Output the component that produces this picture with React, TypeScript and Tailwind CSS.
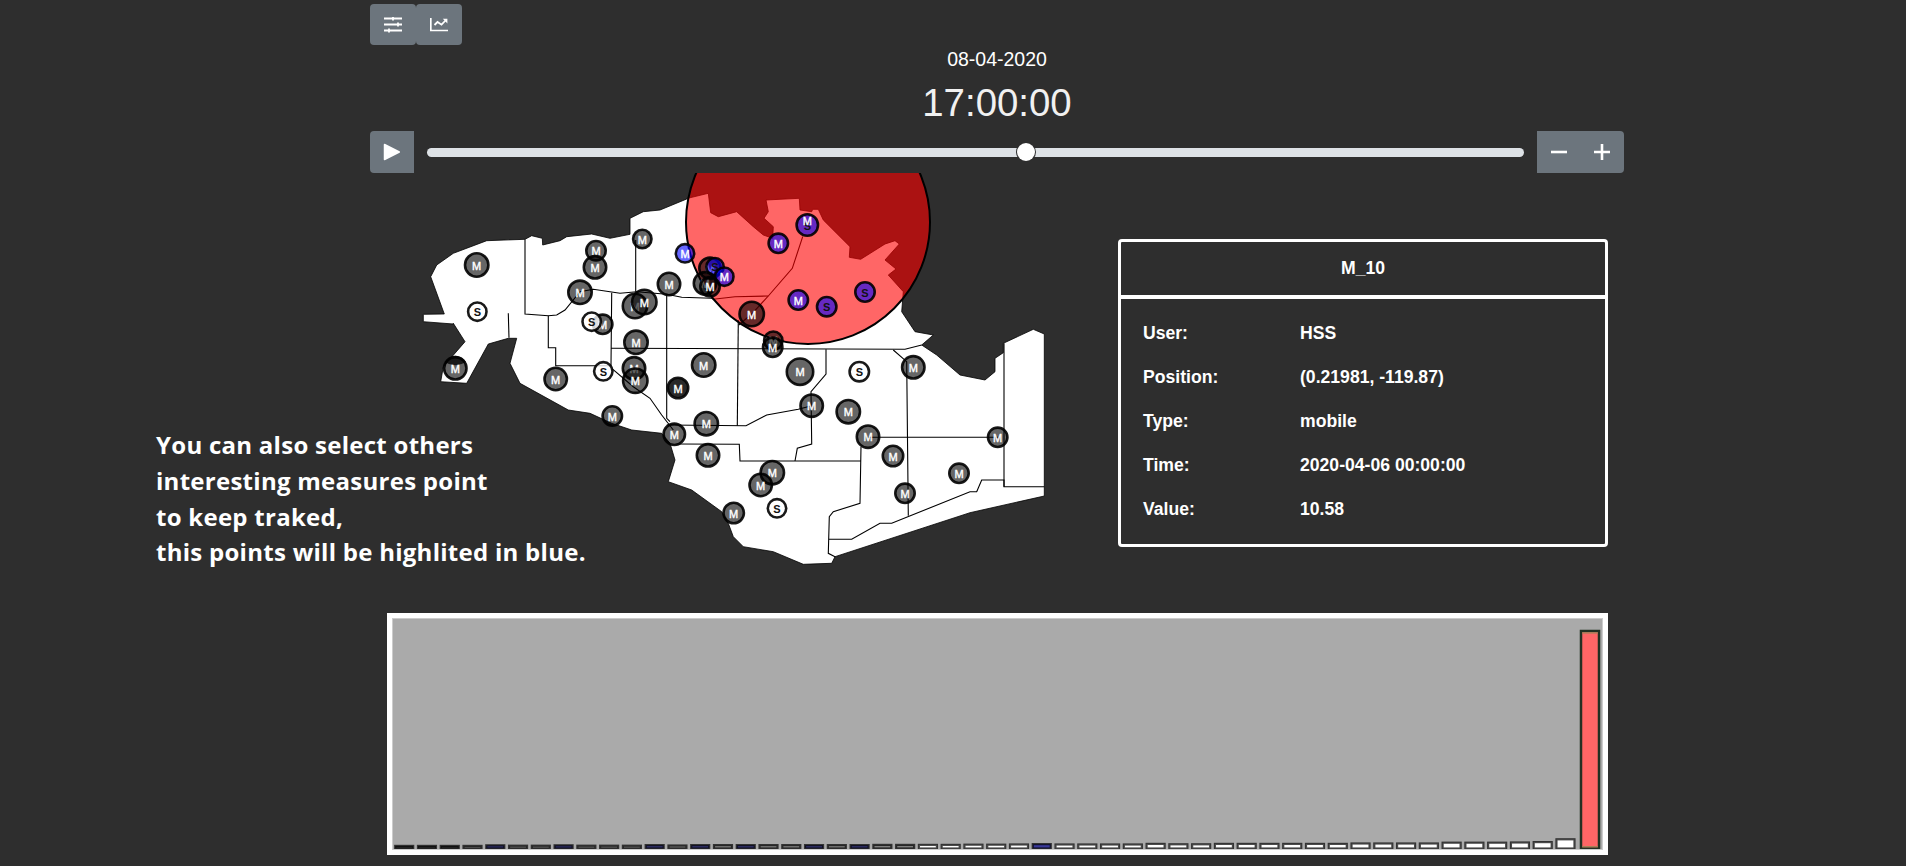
import { ReactNode } from 'react';

type Pt = [number, number];
type Marker = [x: number, y: number, r: number, label: 'M' | 'S', color?: 'blue'];

// traced from crops of the map: zoom-space points mapped to page pixels
const zoomed = (ox: number, oy: number, pts: number[]): Pt[] => {
  const out: Pt[] = [];
  for (let i = 0; i < pts.length; i += 2) out.push([ox + pts[i] / 3, oy + pts[i + 1] / 3]);
  return out;
};
const toD = (pts: Pt[]) => pts.map((p, i) => `${i ? 'L' : 'M'}${p[0].toFixed(1)} ${p[1].toFixed(1)}`).join(' ');

const outline: Pt[] = [
  ...zoomed(410, 170, [62, 320, 80, 285, 130, 250, 230, 212, 345, 208, 365, 197, 397, 205, 398, 225, 450, 212, 470, 200, 545, 192, 600, 205, 660, 193, 660, 145, 700, 125, 750, 120, 830, 87]),
  ...zoomed(620, 170, [203, 85, 265, 70, 272, 128, 295, 140, 350, 125, 400, 170, 430, 195, 458, 205, 460, 170, 432, 145, 445, 125, 438, 90, 538, 85, 540, 120, 575, 125, 578, 118, 595, 118, 610, 150, 690, 230, 688, 262, 722, 268, 795, 222, 825, 212, 838, 222, 795, 270, 828, 297, 805, 315, 850, 365, 845, 425, 885, 485, 940, 495, 905, 525]),
  ...zoomed(720, 320, [605, 75, 650, 105, 720, 165, 795, 180, 825, 155, 825, 115, 850, 98, 850, 70, 940, 28, 973, 42, 973, 528, 750, 578, 345, 710, 335, 730, 250, 733, 160, 695, 70, 680, 40, 650, 25, 610]),
  ...zoomed(420, 320, [905, 575, 815, 510, 745, 485, 765, 420, 750, 370, 725, 340, 635, 330, 575, 310, 510, 280, 445, 270, 300, 190, 270, 130, 290, 55, 265, 55, 205, 72, 140, 190, 62, 185, 70, 140, 135, 65, 100, 10]),
  ...zoomed(410, 170, [130, 462, 40, 455, 40, 433, 103, 432]),
];

const borders: Pt[][] = [
  [...zoomed(410, 170, [345, 208, 345, 432, 415, 437, 440, 435, 465, 420, 510, 365, 550, 358, 630, 370, 680, 365, 770, 373, 815, 382, 905, 385]), ...zoomed(620, 170, [280, 388, 345, 380, 445, 378])],
  zoomed(620, 170, [356, 465, 395, 432, 445, 378, 517, 295, 548, 200]),
  zoomed(410, 170, [677, 210, 677, 365]),
  [...zoomed(410, 170, [770, 373, 770, 690]), ...zoomed(420, 320, [740, 295, 750, 305])],
  zoomed(410, 170, [605, 368, 603, 587, 437, 587, 437, 533, 415, 533, 415, 437]),
  zoomed(410, 170, [295, 430, 297, 503]),
  [...zoomed(410, 170, [603, 535]), ...zoomed(720, 320, [555, 88, 605, 75])],
  zoomed(420, 320, [575, 145, 640, 200, 690, 235, 725, 285, 760, 330]),
  [...zoomed(420, 320, [740, 315]), ...zoomed(720, 320, [78, 317, 140, 285, 235, 268, 272, 258])],
  zoomed(720, 320, [318, 88, 318, 162, 273, 215, 275, 372, 232, 385, 225, 423]),
  [...zoomed(420, 320, [770, 372]), ...zoomed(720, 320, [58, 373, 60, 423, 423, 423])],
  zoomed(720, 320, [55, 0, 52, 317]),
  zoomed(720, 320, [520, 90, 560, 125, 565, 587]),
  zoomed(720, 320, [445, 352, 835, 352]),
  zoomed(720, 320, [423, 380, 420, 550, 340, 575, 328, 590, 325, 700, 345, 710]),
  zoomed(720, 320, [327, 658, 395, 658, 480, 610, 515, 610, 750, 515, 770, 515, 785, 480, 852, 480, 852, 500, 973, 500]),
  zoomed(720, 320, [852, 70, 852, 500]),
];

const markers: Marker[] = [
  [476.7, 265, 13, 'M'], [477.3, 311.7, 10.5, 'S'], [455.3, 368.3, 12.5, 'M'],
  [596, 250.7, 11, 'M'], [595, 267.3, 12.5, 'M'], [642.3, 239, 10.5, 'M'], [685, 253.3, 10.5, 'M', 'blue'],
  [580, 292.3, 13, 'M'], [602.7, 324.3, 11, 'M'], [591.7, 321.7, 10.5, 'S'], [635, 306, 13.5, 'M'], [644.3, 302, 13.5, 'M'],
  [669, 284, 12.5, 'M'], [636, 342.3, 13, 'M'], [634, 368.3, 12.5, 'M'], [635.3, 380.7, 13.5, 'M'],
  [603.3, 371.3, 10.5, 'S'], [555.7, 379, 12.5, 'M'], [703.7, 365, 13, 'M'], [678, 388, 11.5, 'M'],
  [710, 268.3, 12, 'M'], [715, 266.7, 10, 'S', 'blue'], [724.3, 276.7, 10.5, 'M', 'blue'],
  [705, 283.3, 12.5, 'M'], [710, 286.7, 11, 'M'],
  [778.3, 243.3, 11, 'M', 'blue'], [807.3, 225, 12, 'S', 'blue'], [798.3, 300, 11, 'M', 'blue'],
  [826.7, 306.7, 11, 'S', 'blue'], [865, 292, 11, 'S', 'blue'], [751.7, 314, 13.5, 'M'], [773.3, 340.7, 10.5, 'M'], [772.7, 347.3, 11, 'M'],
  [800, 371.7, 14.5, 'M'], [859.3, 371.7, 11, 'S'], [913.3, 367.3, 12.5, 'M'], [811.7, 405.7, 12.5, 'M'], [848.3, 411.7, 13, 'M'],
  [868, 436.7, 12.5, 'M'], [893, 456, 11.5, 'M'], [997.7, 437.3, 11, 'M'], [959, 473.3, 11, 'M'], [905, 493.3, 11, 'M'],
  [772.3, 472.7, 13, 'M'], [760.7, 485, 12.5, 'M'], [777, 508.3, 10.5, 'S'], [733.7, 513, 11.5, 'M'], [612.3, 416, 11, 'M'],
  [674.3, 434.3, 12, 'M'], [706.3, 423.7, 13, 'M'], [708, 455.3, 12.5, 'M'],
];

const rows = [
  ['User:', 'HSS'],
  ['Position:', '(0.21981, -119.87)'],
  ['Type:', 'mobile'],
  ['Time:', '2020-04-06 00:00:00'],
  ['Value:', '10.58'],
];

const barHeights = [
  2.6, 2.6, 2.6, 2.6, 3.2, 2.8, 2.8, 3.2, 2.8, 2.8, 2.8, 3.4, 3, 3.4, 3.4, 3.4, 3.4, 3.4, 3.4, 3.4, 3.4, 3.6, 3.6, 3.6, 3.6, 3.8, 3.8, 4, 4.4, 4, 4, 4, 4, 4.6, 4.2, 4.2, 4.6, 4.6, 4.6, 4.6, 4.6, 4.6, 5, 5, 5, 5, 5.8, 5.8, 5.8, 6, 6.4, 9.2,
];
const darkBlue = [4, 7, 11, 13, 15, 18, 20];

function barFill(i: number) {
  if (i === 28) return '#3a3a9a';
  if (darkBlue.includes(i)) return '#33336e';
  if (i < 3) return '#3a3a3a';
  if (i < 23) return '#808080';
  return '#ffffff';
}

function Btn({ className, children }: { className: string; children: ReactNode }) {
  return <div className={`flex items-center bg-[#6c757d] text-white ${className}`}>{children}</div>;
}

function TuneIcon() {
  return (
    <svg width="18" height="16" viewBox="0 0 18 16" fill="none" stroke="#fff" strokeWidth="1.8">
      <path d="M0 1.5h18M0 7.5h18M0 13.5h18" />
      <path d="M9 0v3.5M14 5.5v4M5 11.5v4" />
    </svg>
  );
}

function ChartIcon() {
  return (
    <svg width="18" height="15" viewBox="0 0 18 15" fill="none" stroke="#fff">
      <path d="M.8 1v12.5H18" strokeWidth="1.7" />
      <path d="M4.5 8l3-3 4 2.7 4-4.2" strokeWidth="1.8" />
      <path d="M12.8 1.8h4.6v4.6z" fill="#fff" strokeWidth="0" />
    </svg>
  );
}

function MapView() {
  return (
    <svg width="640" height="392" viewBox="420 173 640 392" className="shrink-0">
      <path d={`${toD(outline)} Z`} fill="#fff" stroke="#000" strokeWidth="0.8" />
      {borders.map((b, i) => (
        <path key={i} d={toD(b)} fill="none" stroke="#000" strokeWidth="1.1" />
      ))}
      <circle cx="808" cy="222" r="122" fill="#ff0000" fillOpacity="0.6" stroke="#000" strokeWidth="2" />
      {/* darker overlaps under the labels */}
      <path d="M444.5 362A12.5 12.5 0 0 1 466.1 362A20 20 0 0 1 444.5 362Z" fill="#000" fillOpacity="0.75" />
      <circle cx="678" cy="388" r="9.5" fill="#000" fillOpacity="0.6" />
      {markers.map(([x, y, r, label, color], i) => {
        const isSensor = label === 'S' && color !== 'blue';
        return (
          <g key={i}>
            <circle
              cx={x}
              cy={y}
              r={r - 1.3}
              fill={color === 'blue' ? '#0000ff' : isSensor ? '#ffffff' : '#000000'}
              fillOpacity={isSensor ? 0.8 : 0.6}
              stroke="#000"
              strokeOpacity="0.9"
              strokeWidth="2.6"
            />
            <text
              x={x}
              y={y + 0.5}
              textAnchor="middle"
              dominantBaseline="central"
              fontSize="11"
              fontWeight={label === 'S' ? 'bold' : 'normal'}
              fill={label === 'S' ? '#111' : '#fff'}
              stroke={label === 'S' ? 'none' : '#fff'}
              strokeWidth="0.4"
            >
              {label}
            </text>
          </g>
        );
      })}
      {/* second label on the stacked purple point */}
      <text x="807.3" y="221" textAnchor="middle" dominantBaseline="central" fontSize="11" fill="#fff" stroke="#fff" strokeWidth="0.4">
        M
      </text>
    </svg>
  );
}

function Histogram() {
  return (
    <div className="ml-[17px] mt-[48px] h-[242px] w-[1221px] border-[5px] border-white">
      <svg width="1211" height="232" viewBox="392 618 1211 232" className="block bg-[#aaaaaa] outline outline-1 -outline-offset-1 outline-[#cccccc]">
        {barHeights.map((h, i) => (
          <rect
            key={i}
            x={395.2 + i * 22.77}
            y={848.5 - h}
            width={18}
            height={h}
            fill={barFill(i)}
            stroke="#000"
            strokeOpacity="0.7"
            strokeWidth="2.2"
          />
        ))}
        <rect x="1581" y="631" width="18" height="217.5" fill="#ff6666" stroke="#233023" strokeWidth="2.5" />
        <rect x="1582.2" y="632.2" width="15.6" height="1.4" fill="#a68258" />
        <rect x="1582.2" y="846" width="15.6" height="1.4" fill="#a68258" />
      </svg>
    </div>
  );
}

export default function App() {
  return (
    <div className="relative h-[866px] w-full overflow-hidden bg-[#2e2e2e] font-['Liberation_Sans',Arial,sans-serif] text-white">
      <div className="ml-[370px] flex w-[1254px] flex-col pt-1">
        <div className="flex h-[41px]">
          <Btn className="w-[46px] justify-center rounded"><TuneIcon /></Btn>
          <Btn className="w-[46px] justify-center rounded"><ChartIcon /></Btn>
        </div>

        <div className="h-[86px] text-center">
          <p className="mt-[3px] text-[19.5px] leading-[23px]">08-04-2020</p>
          <p className="mt-[9px] text-[38.4px] leading-[46px] text-[#f1f1f1]">17:00:00</p>
        </div>

        <div className="flex h-[42px] items-center">
          <Btn className="h-full w-[44px] justify-center rounded-l">
            <svg width="18" height="18" viewBox="0 0 18 18" fill="#fff">
              <path d="M1.5 1.5v15l14.8-7.5z" stroke="#fff" strokeWidth="1.5" strokeLinejoin="round" />
            </svg>
          </Btn>
          <div className="relative ml-[13px] mr-[13px] h-[9px] flex-1 rounded-full bg-[#dee2e6]">
            <span className="absolute left-[590px] top-1/2 h-[20px] w-[20px] -translate-x-px -translate-y-1/2 rounded-full bg-[#2e2e2e]" />
            <span className="absolute left-[590px] top-1/2 h-[18px] w-[18px] -translate-y-1/2 rounded-full bg-white" />
          </div>
          <Btn className="h-full w-[87px] justify-between rounded-r px-[14px]">
            <svg width="16" height="16" viewBox="0 0 16 16" stroke="#fff" strokeWidth="2.6">
              <path d="M0 8h16" />
            </svg>
            <svg width="16" height="16" viewBox="0 0 16 16" stroke="#fff" strokeWidth="2.6">
              <path d="M0 8h16M8 0v16" />
            </svg>
          </Btn>
        </div>

        <div className="flex">
          <div className="ml-[50px]"><MapView /></div>
          <div className="ml-[58px] mt-[66px] h-[308px] w-[490px] rounded border-[3px] border-white text-[17.6px] font-bold">
            <div className="flex h-[57px] items-center justify-center border-b-[4px] border-white">M_10</div>
            <div className="flex flex-col gap-[20px] pl-[22px] pt-[22px]">
              {rows.map(([label, value]) => (
                <div key={label} className="flex h-[24px] items-center">
                  <span className="w-[157px]">{label}</span>
                  <span>{value}</span>
                </div>
              ))}
            </div>
          </div>
        </div>

        <Histogram />
      </div>

      <p className="absolute left-[156px] top-[427px] font-['Open_Sans',sans-serif] text-[24px] font-bold leading-[35.8px] tracking-[0.27px] text-white">
        You can also select others
        <br />
        interesting measures point
        <br />
        to keep traked,
        <br />
        this points will be highlited in blue.
      </p>
    </div>
  );
}
